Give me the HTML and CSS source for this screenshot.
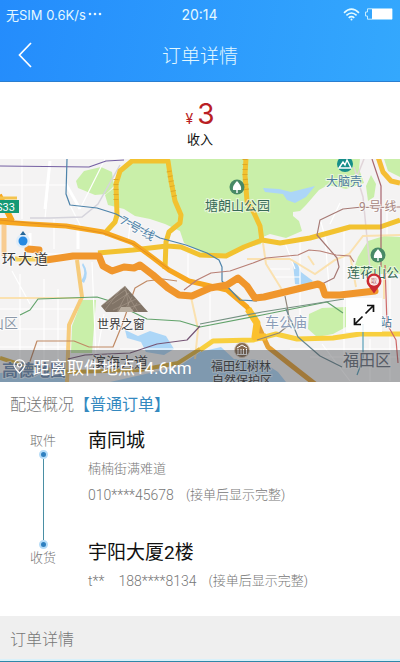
FILE: index.html
```html
<!DOCTYPE html>
<html lang="zh-CN">
<head>
  <meta charset="UTF-8">
  <meta name="viewport" content="width=device-width, initial-scale=1">
  <title>订单详情</title>
  <link rel="stylesheet" href="styles.css">
</head>
<body>
  <header class="header">
    <div class="status">
      <span class="status-left">无SIM 0.6K/s<svg width="14" height="4" viewBox="0 0 14 4" fill="#e4f5ff"><circle cx="2" cy="2" r="1.3"/><circle cx="7" cy="2" r="1.3"/><circle cx="12" cy="2" r="1.3"/></svg></span>
      <span class="status-time">20:14</span>
      <span class="status-right">
        <svg width="17" height="13" viewBox="0 0 17 13" fill="none" stroke="#e4fbff" stroke-width="1.6">
          <path d="M1 4.8Q8.5-2.4 16 4.8M3.4 7.4Q8.5 2.6 13.6 7.4M5.7 9.9Q8.5 7.4 11.3 9.9"/>
          <circle cx="8.5" cy="11.5" r="1" fill="#e4fbff" stroke="none"/>
        </svg>
        <svg width="29" height="12" viewBox="0 0 29 12">
          <path d="M3.5.8H28v10.400H3.5V8H1.5V4h2z" fill="none" stroke="#c4ecff"/>
          <rect x="8" y="1" width="20" height="10" fill="#fff"/>
        </svg>
      </span>
    </div>
    <div class="nav">
      <button class="back" type="button" aria-label="返回">
        <svg width="14" height="26" viewBox="0 0 14 26" fill="none" stroke="#fff" stroke-width="1.7"><path d="M13 1L1.5 13 13 25"/></svg>
      </button>
      <h1 class="title">订单详情</h1>
    </div>
  </header>

  <section class="income">
    <p class="price"><span class="yen">¥</span>3</p>
    <p class="income-label">收入</p>
  </section>

  <section class="map">
    <svg class="map-canvas" viewBox="0 0 400 223">
      <rect width="400" height="223" fill="#f4f3f3"/>

      <!-- parks -->
      <g fill="#c9efa9">
        <path d="M126 4L140 0H360L359 10 364 24 346 30 328 26 319 31 306 46 300 52 293 53 293 57 299 62 302 72 286 79 270 75 263 78 261 85 238 91 225 97 208 97 184 84 180 72 165 65 150 60 135 57 124 50 108 46 105 36 115 28z"/>
        <path d="M76 22L84 12 101 8 112 13 114 27 106 35 95 36 78 29z"/>
        <path d="M371 16L376 25 374 38 368 42 366 27zM384 0H400V18L388 12z"/>
        <path d="M368 82L384 77 400 78V115H352L358 98z"/>
        <path d="M82 141H96L92 194H71L72 167z"/>
        <path d="M309 155L322 149 346 148V168L333 175 317 178 308 170z"/>
      </g>

      <!-- water -->
      <g fill="#acd6f7">
        <path d="M263 29L279 30 291 33 315 27 306 38 295 44 287 41 283 35 265 33z"/>
        <path d="M125 171L138 177 150 172 166 177 174 190 164 196 146 193 141 183 127 179z"/>
        <path d="M110 223L150 214 178 208 200 193 221 188 234 200 260 201 278 213 286 223z"/>
        <path d="M0 214L30 212 66 216 66 223H0z"/>
        <path d="M293 103L297 104 301 113 313 122 307 126 295 125z"/>
        <path d="M83 104Q90 114 84 124L81 122Q87 114 82 106z"/>
      </g>

      <!-- side streets -->
      <g fill="none" stroke="#fff" stroke-width="1.200">
        <path d="M0 26H66M22 0V60M50 7L45 60M70 46L82 70M35 95H100M0 150H78M0 170H70M0 188H66M20 115V200M44 120V212M58 130V200M12 112L30 145M92 103L96 200M54 60V90M105 0L80 50M130 65L128 85M104 155L98 190M188 95V130M120 190H190"/>
        <path d="M210 135V180M300 80V170M325 78L330 140M344 70V210M370 180V222M387 40V76M270 110H290M275 118H300M290 190H400M310 198H400M320 60L330 95M340 44L330 65M285 84L295 110M390 116V222M322 185L350 222"/>
      </g>
      <path d="M66 25L80 50M50 2L45 50M30 74V90M78 70V90" fill="none" stroke="#fff" stroke-width="3"/>
      <g fill="none" stroke="#d5d4dc" stroke-width="1.500">
        <path d="M30 59H50L82 58 98 45 120 6"/>
        <path d="M354 8L363 38 372 130M364 0L356 20" stroke="#e1d5d9"/>
      </g>
      <g fill="none" stroke="#fae1b0" stroke-width="2">
        <path d="M77 101L82 138 69 166 67 223" stroke="#f6cb7b" stroke-width="4"/>
        <path d="M4 66V97" stroke="#f8cc91" stroke-width="5"/>
        <path d="M263 84L266 105 284 134M247 100H290L315 115 335 101 349 95 363 77 400 76M308 97L314 106M350 96L356 128M191 138L198 170 195 200M0 139H80M384 115V140"/>
      </g>

      <!-- main roads -->
      <g fill="none" stroke="#f2c230" stroke-linejoin="round" stroke-width="5">
        <path d="M104 75L115 63 117 56 116 25 120 12 132 2H168L171 22 175 42 181 56 180 64 169 73 166 83 165 110"/>
        <path d="M246-1L245 16 247 42 254 54 260 67 262 82"/>
        <path d="M378-2L383 13 391 22 400 24" stroke="#f5bd34"/>
        <path d="M98 94L133 91 167 87 181 88 200 96 226 97 244 88 262 81 280 84 310 79 350 68 380 68 400 61"/>
        <path d="M200 191L213 182 253 181 276 175 297 180 333 179 360 175 400 175" stroke="#f8cf3e"/>
        <path d="M0 199L28 208 70 213 140 211 178 204 200 190" stroke="#e2b43e" stroke-width="4"/>
        <path d="M15 100H40" stroke="#f6d35d"/>
      </g>
      <path d="M116 20V45M169 12L175 40M245 0V18L247 34" fill="none" stroke="#dda927" stroke-width="5" stroke-dasharray="1 4"/>
      <g fill="none" stroke="#f7a71f" stroke-width="5" stroke-linejoin="round">
        <path d="M0 63L30 65 66 67 103 73 133 84 152 98 169 111 189 122 227 131 247 148 257 164"/>
        <path d="M-1 36L12 62M0 62H14" stroke-width="6"/>
        <path d="M257 164L268 188 292 207 315 225" stroke="#e5a034"/>
        <path d="M248 150L257 164 255 178 266 178" stroke="#fbc02d" stroke-width="7"/>
      </g>
      <path d="M0 61L30 64 66 67 103 74 134 85 169 110" fill="none" stroke="#e29022" stroke-width="1"/>

      <!-- metro lines -->
      <g fill="none" stroke-width="1.200" stroke-linejoin="round">
        <path d="M0 7L89 8 106 2 124 1" stroke="#7560a3"/>
        <path d="M67 0L66 35 70 46 97 49 116 55 160 79 186 86 207 94 219 101 222 108 222 122 240 141 257 142" stroke="#4d83aa"/>
        <path d="M20 156L30 151 38 140 97 138 110 142 147 160 180 162 200 168 262 156 327 143 343 154" stroke="#62a36b"/>
        <path d="M200 165L262 153 344 140" stroke="#739080"/>
        <path d="M372 0L381 27V108" stroke="#a76670"/>
        <path d="M400 48H362L343 50 320 61 317 76 337 99 339 108 334 119 322 125" stroke="#a67974"/>
        <path d="M184 131L197 121 211 114 230 112 253 104 266 99 298 96 309 91 320 92 336 96 350 97 354 103" stroke="#b87f75"/>
        <path d="M27 211L37 182H74L89 188H113L122 166 135 129 147 122 163 120 177 122" stroke="#c08a65"/>
        <path d="M68 200L85 196 130 194 157 185 187 181 200 167" stroke="#765575"/>
        <path d="M285 137L288 152 289 166 279 174 257 181" stroke="#8e8579"/>
        <path d="M286 150L298 178 320 197 342 208" stroke="#688891"/>
        <path d="M385 106L387 165 396 181 398 204" stroke="#ce6969"/>
        <path d="M363 165V200L357 216" stroke="#58a0ba"/>
      </g>

      <!-- planned route -->
      <g fill="none" stroke="#f0962c" stroke-width="7" stroke-linejoin="round" stroke-linecap="round">
        <path d="M28 90L39 91"/>
        <path d="M46 101L73 97 99 97 103 107 112 112 124 108 134 109 140 106 153 116 168 129 179 136 192 137 210 129 227 126 238 119 247 127 255 139 264 138 318 125 322 127 325 136 340 136 375 132"/>
      </g>

      <path d="M0 39H17" stroke="#f4c44e" stroke-width="3"/>
      <rect y="41" width="19" height="13" fill="#159975"/>

      <!-- start -->
      <circle cx="23" cy="82" r="7" fill="#dfedf9"/>
      <circle cx="23" cy="82" r="4.5" fill="#2589e2"/>
      <path d="M20 76L23 72 26 76z" fill="#276799"/>

      <!-- pyramid -->
      <path d="M101 147L125 127 148 153H106z" fill="#817467"/>
      <path d="M101 147L125 127 130 153M106 145L125 131 138 153M112 145L129 134M113 151L136 140M118 152L141 145M121 130L105 151M127 134L117 153M132 138L124 153M137 144L131 153" fill="none" stroke="#aea193" stroke-width=".5"/>
      <path d="M118 153L121 148H130L134 153z" fill="#b9aea0"/>

      <!-- places -->
      <g fill="#488966">
        <circle cx="237" cy="28" r="7.5"/>
        <circle cx="378" cy="96" r="7.5"/>
      </g>
      <g fill="#fff">
        <path d="M237 22Q232 27 233 31H236.300V34H237.700V31H241Q242 27 237 22z"/>
        <path d="M378 90Q373 95 374 99H377.300V102H378.700V99H382Q383 95 378 90z"/>
      </g>
      <circle cx="345" cy="5" r="8" fill="#168e89"/>
      <path d="M339 9L343 3 345 6 347 1 351 9z" fill="none" stroke="#fff" stroke-width="1.4"/>
      <circle cx="242" cy="191" r="7.5" fill="#866b52" stroke="#d4c7b7"/>
      <path d="M237 189L242 186 247 189M238 190V195M241 190V195M243.500 190V195M246.500 190V195M237 195.500H247" fill="none" stroke="#fff"/>

      <g class="map-text">
        <text x="-4" y="52" font-size="11" fill="#fff" stroke="none">S33</text>
        <text x="2" y="105" font-size="14">环</text>
        <text x="18" y="105" font-size="14">大</text>
        <text x="34" y="105" font-size="14">道</text>
        <text x="205" y="51" font-size="13" fill="#376957">塘朗山公园</text>
        <text x="326" y="27" font-size="12" fill="#4d7b9c">大脑壳</text>
        <text x="347" y="118" font-size="13" fill="#376957">莲花山公</text>
        <text x="359" y="52" font-size="12" fill="#a98882">9-号-线</text>
        <text transform="translate(119 64) rotate(29)" font-size="12" fill="#4d81a7">7-号-线</text>
        <text x="97" y="170" font-size="12">世界之窗</text>
        <text x="-10" y="169" font-size="14" fill="#8d99a9">山区</text>
        <text x="265" y="168" font-size="14" fill="#8b9db8">车公庙</text>
        <text x="380" y="168" font-size="12" fill="#4d7795">站</text>
        <text x="343" y="207" font-size="16" fill="#69717d">福田区</text>
        <text x="211" y="212" font-size="12">福田红树林</text>
        <text x="212" y="226" font-size="12">自然保护区</text>
        <text x="92" y="208" font-size="14">滨海大道</text>
        <text x="2" y="217" font-size="16" font-weight="700" fill="#6989b1">高德地图</text>
      </g>
    </svg>

    <div class="distance">
      <svg width="13" height="15" viewBox="0 0 13 15" fill="none" stroke="#fff" stroke-width="1.2"><path d="M6.500 14Q1 8.500 1 6A5.500 5.200 0 0 1 12 6Q12 8.500 6.500 14z"/><circle cx="6.5" cy="6" r="2"/></svg>
      距离取件地点14.6km
    </div>
    <button class="expand" type="button" aria-label="展开地图">
      <svg width="22" height="22" viewBox="0 0 22 22" fill="none" stroke="#111" stroke-width="1.7"><path d="M12.500 9.500L20 2M14 1.500H20.500V8M9.500 12.500L2 20M1.500 14V20.500H8"/></svg>
    </button>
    <svg class="pin" width="16" height="21" viewBox="0 0 16 21">
      <path d="M8 20.500L2.500 13Q.5 10.500.500 8A7.500 7.500 0 0 1 15.500 8Q15.500 10.500 13.500 13z" fill="#ca2932"/>
      <circle cx="8" cy="7.8" r="5" fill="#fae9e6"/>
      <text x="5" y="10" font-size="6" fill="#a94449">取</text>
    </svg>
  </section>

  <main class="delivery">
    <h2 class="delivery-title">配送概况<span class="type">【普通订单】</span></h2>
    <div class="stops">
      <div class="track">
        <span>取件</span>
        <i class="dot"></i>
        <i class="line"></i>
        <i class="dot"></i>
        <span>收货</span>
      </div>
      <div class="places">
        <div class="stop">
          <h3>南同城</h3>
          <p>楠楠街满难道</p>
          <p class="contact"><span>010****45678</span><span class="note">(接单后显示完整)</span></p>
        </div>
        <div class="stop">
          <h3>宇阳大厦2楼</h3>
          <p class="contact"><span class="name">t**</span><span>188****8134</span><span class="note">(接单后显示完整)</span></p>
        </div>
      </div>
    </div>
  </main>

  <h2 class="detail-title">订单详情</h2>
</body>
</html>
```

FILE: styles.css
```css
* {
  box-sizing: border-box;
}
body {
  margin: 0;
  background: #fff;
  color: #111;
  font-family: Roboto, "Noto Sans CJK SC", sans-serif;
  font-weight: 300;
}
h1, h2, h3, p {
  margin: 0;
  font-weight: inherit;
}
button {
  border: 0;
  padding: 0;
  background: none;
  cursor: pointer;
}
svg {
  display: block;
}

.header {
  background: linear-gradient(100deg, #248cfc, #34a8fd);
  border-bottom: 1px solid #2a7ed0;
  color: #e4f8ff;
}
.status {
  display: grid;
  grid-template-columns: 1fr auto 1fr;
  align-items: center;
  height: 28px;
  padding: 0 7px 0 6px;
  font-family: Inter, "Noto Sans CJK SC", sans-serif;
  font-size: 13px;
  font-weight: 400;
}
.status-left,
.status-right {
  display: flex;
  align-items: center;
  gap: 2px;
}
.status-right {
  gap: 4px;
  justify-content: flex-end;
}
.status-time {
  font-size: 14px;
}
.nav {
  display: grid;
  grid-template-columns: 48px 1fr 48px;
  align-items: center;
  height: 53px;
}
.back {
  padding-left: 18px;
}
.title {
  text-align: center;
  font-size: 19px;
}

.income {
  display: flex;
  flex-direction: column;
  align-items: center;
  height: 77px;
  padding-top: 16px;
}
.price {
  font-family: Inter, sans-serif;
  font-size: 28px;
  line-height: 32px;
  color: #b91e24;
  font-weight: 400;
}
.yen {
  margin-right: 4px;
  font-size: 14px;
  line-height: 1;
}
.income-label {
  font-size: 13px;
  line-height: 20px;
  font-weight: 400;
}

.map {
  position: relative;
  overflow: hidden;
}
.map-canvas {
  width: 100%;
  height: auto;
}
.map-text {
  fill: #3b3b3b;
  font-weight: 400;
  stroke: #fff;
  stroke-width: 2px;
  stroke-opacity: .6;
  paint-order: stroke;
}
.distance {
  position: absolute;
  left: 0;
  right: 0;
  bottom: 0;
  display: flex;
  align-items: center;
  gap: 7px;
  height: 32px;
  padding-left: 13px;
  background: rgba(60, 62, 68, .4);
  color: #fff;
  font-size: 17px;
  font-weight: 400;
}
.expand {
  position: absolute;
  right: 18px;
  bottom: 50px;
  display: grid;
  place-items: center;
  width: 36px;
  height: 34px;
  background: rgba(255, 255, 255, .85);
}
.pin {
  position: absolute;
  right: 18px;
  bottom: 88px;
}

.delivery {
  padding: 9px 10px 22px;
  color: #777;
}
.delivery-title {
  font-size: 16px;
  line-height: 28px;
}
.type {
  color: #3489bf;
  font-weight: 400;
}
.stops {
  display: flex;
  gap: 12px;
  padding-top: 7px;
}
.track {
  display: flex;
  flex-direction: column;
  align-items: center;
  width: 66px;
  padding: 6px 0 27px;
  font-size: 13px;
  line-height: 18px;
}
.dot {
  width: 9px;
  height: 9px;
  border: 2px solid #b5dcf8;
  border-radius: 50%;
  background: #2f80c0;
}
.line {
  flex: 1;
  width: 1px;
  background: #4a8fa4;
}
.places {
  flex: 1;
  font-size: 13px;
  line-height: 26px;
}
.stop + .stop {
  margin-top: 30px;
}
.stop h3 {
  color: #111;
  font-size: 19px;
  line-height: 30px;
  font-weight: 400;
}
.contact {
  display: flex;
  font-size: 14px;
}
.name {
  margin-right: 14px;
}
.note {
  margin-left: 12px;
  font-size: 13px;
}

.detail-title {
  padding: 2px 10px 0;
  background: #efefef;
  border-bottom: 1px solid #2f87a8;
  box-shadow: inset 0 -2px #d9f1fa;
  color: #777;
  font-size: 16px;
  line-height: 43px;
}
```
